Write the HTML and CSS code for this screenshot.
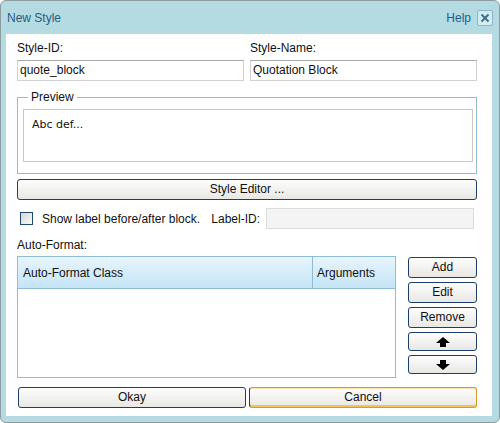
FILE: index.html
```html
<!DOCTYPE html>
<html>
<head>
<meta charset="utf-8">
<title>New Style</title>
<link rel="stylesheet" href="styles.css">
</head>
<body>
<div class="window">
  <div class="titlebar">
    <span class="title">New Style</span>
    <span class="help">Help</span>
    <span class="close"><svg width="10" height="10" viewBox="0 0 10 10"><path d="M1.5 1.5 L8.5 8.5 M8.5 1.5 L1.5 8.5" stroke="#3b6a88" stroke-width="1.8" fill="none"/></svg></span>
  </div>
  <div class="panel">
    <div class="fields">
      <div class="field">
        <span class="lbl">Style-ID:</span>
        <div class="input">quote_block</div>
      </div>
      <div class="field">
        <span class="lbl">Style-Name:</span>
        <div class="input">Quotation Block</div>
      </div>
    </div>
    <fieldset class="preview">
      <legend>Preview</legend>
      <div class="preview-box">Abc def...</div>
    </fieldset>
    <button class="btn wide">Style Editor ...</button>
    <div class="label-row">
      <span class="checkbox"></span>
      <span class="cb-text">Show label before/after block.</span>
      <span class="lid">Label-ID:</span>
      <div class="input disabled"></div>
    </div>
    <div class="lbl af">Auto-Format:</div>
    <div class="af-area">
      <div class="table">
        <div class="thead">
          <div class="th c1">Auto-Format Class</div>
          <div class="th c2">Arguments</div>
        </div>
        <div class="tbody"></div>
      </div>
      <div class="side">
        <button class="btn">Add</button>
        <button class="btn">Edit</button>
        <button class="btn">Remove</button>
        <button class="btn arrow"><svg width="14" height="10" viewBox="0 0 14 10"><polygon points="7,0 14,6 10,6 10,10 4,10 4,6 0,6" fill="#000"/></svg></button>
        <button class="btn arrow"><svg width="14" height="10" viewBox="0 0 14 10"><polygon points="4,0 10,0 10,4 14,4 7,10 0,4 4,4" fill="#000"/></svg></button>
      </div>
    </div>
    <div class="footer">
      <button class="btn">Okay</button>
      <button class="btn cancel">Cancel</button>
    </div>
  </div>
</div>
</body>
</html>
```

FILE: styles.css
```css
* { box-sizing: border-box; }
html, body { margin: 0; padding: 0; background: #fff; }
body {
  font-family: "Liberation Sans", Arial, sans-serif;
  font-size: 12px;
  color: #111;
  width: 500px;
  height: 423px;
  overflow: hidden;
}
.window {
  width: 500px;
  height: 423px;
  border: 1px solid #8d9ca1;
  border-radius: 6px;
  background: #b5dbe2;
  display: flex;
  flex-direction: column;
}
.titlebar {
  height: 33px;
  flex: none;
  display: flex;
  align-items: center;
  padding: 0 6px;
  line-height: 14px;
}
.title { color: #2a5a80; }
.help { color: #1e5d94; margin-left: auto; margin-right: 6px; }
.close {
  width: 16px;
  height: 16px;
  border: 1px solid #8fb4c6;
  border-radius: 2px;
  background: #d3ecf1;
  display: flex;
  align-items: center;
  justify-content: center;
}
.panel {
  height: 382px;
  flex: none;
  margin: 0 7px 0 5px;
  background: #fff;
  padding: 7px 15px 8px 11px;
  display: flex;
  flex-direction: column;
}
.lbl { line-height: 14px; }
.fields {
  display: grid;
  grid-template-columns: 227px 227px;
  column-gap: 6px;
}
.field { display: flex; flex-direction: column; gap: 5px; }
.input {
  height: 21px;
  border: 1px solid #d2d2d2;
  border-top-color: #a9a9a9;
  padding: 0 2px;
  line-height: 19px;
  background: #fff;
}
.preview {
  margin: 9px 0 0;
  padding: 5px 3px 11px 5px;
  border: 1px solid #8fbdd6;
  min-width: 0;
}
.preview legend {
  padding: 0 3px;
  margin-left: 5px;
  line-height: 14px;
}
.preview-box {
  height: 53px;
  border: 1px solid #c8c8c8;
  padding: 8px 8px;
  font-family: "DejaVu Sans", Verdana, sans-serif;
  font-size: 11px;
  line-height: 13px;
  color: #111;
}
.btn {
  height: 21px;
  margin: 0;
  padding: 0;
  border: 1px solid #1b3f68;
  border-radius: 3px;
  background: linear-gradient(#fdfdfd, #e8e7e3);
  font-family: "Liberation Sans", Arial, sans-serif;
  font-size: 12px;
  color: #111;
  line-height: 19px;
}
.wide { margin-top: 5px; width: 100%; flex: none; }
.label-row {
  margin-top: 8px;
  height: 21px;
  display: flex;
  align-items: center;
  flex: none;
}
.checkbox {
  width: 13px;
  height: 13px;
  margin-left: 3px;
  border: 1px solid #1f4a74;
  background: linear-gradient(135deg, #d6d6d6, #fafafa);
}
.cb-text { margin-left: 9px; }
.lid { margin-left: auto; margin-right: 6px; }
.input.disabled {
  width: 208px;
  margin-right: 3px;
  background: #f4f4f4;
  border: 1px solid #dcdcdc;
}
.af { margin-top: 9px; }
.af-area {
  margin-top: 4px;
  height: 122px;
  display: flex;
  gap: 12px;
  flex: none;
}
.table {
  width: 379px;
  border: 1px solid #8fbdd6;
  display: flex;
  flex-direction: column;
}
.thead {
  height: 32px;
  border-bottom: 1px solid #8fbdd6;
  background: linear-gradient(#e8f5fd, #c4e4f6);
  display: flex;
}
.th { display: flex; align-items: center; }
.c1 { width: 295px; border-right: 1px solid #8fbdd6; padding-left: 5px; }
.c2 { flex: 1; padding-left: 4px; }
.tbody { flex: 1; background: #fff; }
.side {
  width: 69px;
  padding-top: 1px;
  display: flex;
  flex-direction: column;
  gap: 4px;
}
.side .btn { width: 100%; }
.side .arrow {
  height: 19px;
  display: flex;
  align-items: center;
  justify-content: center;
}
.footer {
  margin-top: 9px;
  display: grid;
  grid-template-columns: 1fr 1fr;
  gap: 3px;
  padding-left: 1px;
}
.cancel {
  border-color: #d99a2b;
  border-left-color: #1b3f68;
  box-shadow: inset 0 1px 0 #fbe2ae, inset 0 -2px 0 #f4c25a;
}
```
